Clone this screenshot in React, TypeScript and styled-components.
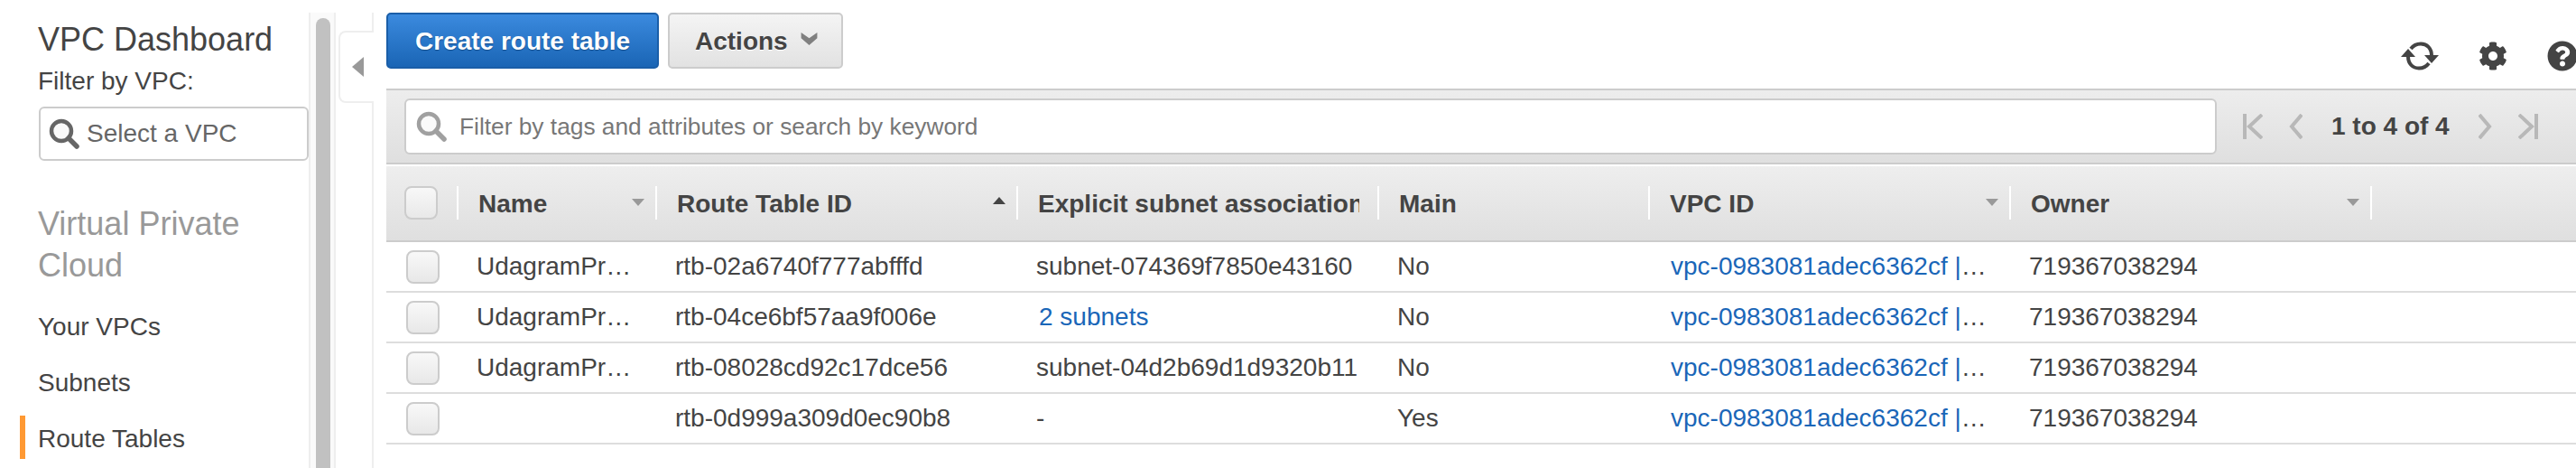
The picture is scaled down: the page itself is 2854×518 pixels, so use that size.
import React from 'react'
import styled, { createGlobalStyle } from 'styled-components'
import { FaCog, FaQuestionCircle } from 'react-icons/fa'

const columns = [
  { label: 'Name', width: 220, sort: 'down' },
  { label: 'Route Table ID', width: 400, sort: 'up' },
  { label: 'Explicit subnet association', width: 400, sort: '' },
  { label: 'Main', width: 300, sort: '' },
  { label: 'VPC ID', width: 400, sort: 'down' },
  { label: 'Owner', width: 400, sort: 'down' },
  { label: '', width: 240, sort: '' },
]

const vpc = 'vpc-0983081adec6362cf | UdagramProd'
const owner = '719367038294'

const rows = [
  { name: 'UdagramProd-Public', id: 'rtb-02a6740f777abfffd', subnet: 'subnet-074369f7850e43160', main: 'No' },
  { name: 'UdagramProd-Public', id: 'rtb-04ce6bf57aa9f006e', subnet: '2 subnets', main: 'No', link: true },
  { name: 'UdagramProd-Private', id: 'rtb-08028cd92c17dce56', subnet: 'subnet-04d2b69d1d9320b11', main: 'No' },
  { name: '', id: 'rtb-0d999a309d0ec90b8', subnet: '-', main: 'Yes' },
]

const SearchIcon = ({ color }: { color: string }) => (
  <svg width={34} height={34} viewBox="0 0 34 34" fill="none">
    <circle cx="14" cy="14" r="11" stroke={color} strokeWidth="4.5" fill="#fafafa" />
    <path d="M22 22l9 9" stroke={color} strokeWidth="5.5" strokeLinecap="round" />
  </svg>
)

const RefreshIcon = () => (
  <svg width="42" height="34" viewBox="0 0 42 32" fill="none">
    <path d="M11 8C14 4 18 2.5 22 2.5c7 0 12 5 12 13" stroke="#444" strokeWidth="4" />
    <path d="M31 24C28 28 24 29.5 20 29.5c-7 0-12-5-12-13" stroke="#444" strokeWidth="4" />
    <path d="M0 17L8 8l8 9zM26 15h16l-8 9z" fill="#444" />
  </svg>
)

const Chevron = ({ d, width }: { d: string; width: number }) => (
  <svg width={width} height="28" viewBox={`0 0 ${width} 28`} fill="none">
    <path d={d} stroke="#b8b8b8" strokeWidth="4" />
  </svg>
)

const App = () => (
  <>
    <GlobalStyle />
    <Page>
      <Sidebar>
        <Title>VPC Dashboard</Title>
        <FilterLabel>Filter by VPC:</FilterLabel>
        <SelectBox>
          <SearchIcon color="#666" />
          <span>Select a VPC</span>
        </SelectBox>
        <SectionTitle>Virtual Private Cloud</SectionTitle>
        <NavItem>Your VPCs</NavItem>
        <NavItem>Subnets</NavItem>
        <NavItem $active>Route Tables</NavItem>
      </Sidebar>
      <Gutter>
        <Thumb />
      </Gutter>
      <CollapseRail>
        <CollapseTab>
          <Arrow />
        </CollapseTab>
      </CollapseRail>
      <Main>
        <Toolbar>
          <PrimaryButton>Create route table</PrimaryButton>
          <ActionsButton>
            Actions
            <ActionsCaret viewBox="0 0 14 11">
              <path d="M0 0l7 5 7-5v5l-7 6-7-6z" fill="#808080" />
            </ActionsCaret>
          </ActionsButton>
          <ToolIcons>
            <RefreshIcon />
            <FaCog size={32} color="#444" />
            <FaQuestionCircle size={34} color="#444" />
          </ToolIcons>
        </Toolbar>
        <FilterBar>
          <FilterInput>
            <SearchIcon color="#a0a0a0" />
            <span>Filter by tags and attributes or search by keyword</span>
          </FilterInput>
          <Pager>
            <Chevron width={22} d="M2 0v28M21 1L7 14l14 13" />
            <Chevron width={15} d="M14 1L3 14l11 13" />
            <PageCount>1 to 4 of 4</PageCount>
            <Chevron width={15} d="M1 1l11 13L1 27" />
            <Chevron width={22} d="M20 0v28M1 1l14 13L1 27" />
          </Pager>
        </FilterBar>
        <HeaderRow>
          <CheckCell>
            <Checkbox />
          </CheckCell>
          {columns.map((col) => (
            <HeaderCell key={col.label} $width={col.width}>
              <HeaderLabel>{col.label}</HeaderLabel>
              {col.sort && <SortCaret $dir={col.sort} />}
            </HeaderCell>
          ))}
        </HeaderRow>
        {rows.map((row) => (
          <Row key={row.id}>
            <CheckCell $row>
              <Checkbox />
            </CheckCell>
            <Cell $width={220}>{row.name}</Cell>
            <Cell $width={400}>{row.id}</Cell>
            <Cell $width={400}>{row.link ? <CellLink>{row.subnet}</CellLink> : row.subnet}</Cell>
            <Cell $width={300}>{row.main}</Cell>
            <Cell $width={400}>
              <CellLink>{vpc}</CellLink>
            </Cell>
            <Cell $width={400}>{owner}</Cell>
          </Row>
        ))}
      </Main>
    </Page>
  </>
)

const GlobalStyle = createGlobalStyle`
  html, body {
    margin: 0;
    padding: 0;
    background: #fff;
    overflow: hidden;
  }
  body {
    font-family: 'Liberation Sans', Arial, sans-serif;
    color: #444;
  }
`

const Page = styled.div`
  display: flex;
  width: 2854px;
  height: 518px;
  padding-top: 14px;
  box-sizing: border-box;
  overflow: hidden;
`

const Sidebar = styled.div`
  width: 342px;
  flex: none;
  padding: 7px 0 0 42px;
  box-sizing: border-box;
`

const Title = styled.div`
  font-size: 36px;
  line-height: 46px;
  color: #444;
`

const FilterLabel = styled.div`
  font-size: 28px;
  line-height: 30px;
  margin-top: 8px;
`

const SelectBox = styled.div`
  display: flex;
  align-items: center;
  gap: 8px;
  width: 299px;
  height: 60px;
  margin: 13px 0 0 1px;
  padding-left: 9px;
  box-sizing: border-box;
  border: 2px solid #ccc;
  border-radius: 6px;
  font-size: 28px;
  color: #666;
`

const SectionTitle = styled.div`
  font-size: 36px;
  line-height: 46px;
  color: #999;
  margin: 47px 0 21px;
  width: 280px;
`

const NavItem = styled.div<{ $active?: boolean }>`
  position: relative;
  font-size: 28px;
  line-height: 48px;
  height: 48px;
  margin-bottom: 14px;
  color: #444;

  ${(p) =>
    p.$active &&
    `
    &::before {
      content: '';
      position: absolute;
      left: -20px;
      top: -2px;
      width: 6px;
      height: 48px;
      background: #ff9933;
    }
  `}
`

const Gutter = styled.div`
  flex: none;
  width: 30px;
  padding: 6px 0 0 6px;
  box-sizing: border-box;
  background: #fafafa;
  border-left: 2px solid #eee;
  border-right: 2px solid #eee;
`

const Thumb = styled.div`
  width: 16px;
  height: 600px;
  border-radius: 8px;
  background: #c1c1c1;
`

const CollapseRail = styled.div`
  flex: none;
  width: 42px;
  padding: 20px 0 0 3px;
  box-sizing: border-box;
  border-right: 2px solid #eee;
`

const CollapseTab = styled.div`
  display: flex;
  align-items: center;
  width: 39px;
  height: 80px;
  margin-right: -2px;
  padding-left: 13px;
  box-sizing: border-box;
  position: relative;
  background: #fff;
  border: 2px solid #eee;
  border-right: none;
  border-radius: 8px 0 0 8px;
`

const Arrow = styled.div`
  width: 0;
  height: 0;
  border-top: 11px solid transparent;
  border-bottom: 11px solid transparent;
  border-right: 13px solid #999;
`

const Main = styled.div`
  flex: none;
  width: 2440px;
  margin-left: 14px;
`

const Toolbar = styled.div`
  display: flex;
  height: 84px;
  gap: 10px;
`

const PrimaryButton = styled.div`
  display: flex;
  align-items: center;
  justify-content: center;
  width: 302px;
  height: 62px;
  padding-top: 2px;
  box-sizing: border-box;
  border: 2px solid #1a5ea8;
  border-radius: 5px;
  background: linear-gradient(#3b8ade, #1a65b5);
  color: #fff;
  font-size: 28px;
  font-weight: bold;
  text-shadow: 0 1px 1px #124a86;
`

const ActionsButton = styled.div`
  display: flex;
  align-items: center;
  gap: 14px;
  width: 194px;
  height: 62px;
  padding: 2px 0 0 28px;
  box-sizing: border-box;
  border: 2px solid #ccc;
  border-radius: 5px;
  background: linear-gradient(#f4f4f4, #e2e2e2);
  color: #444;
  font-size: 28px;
  font-weight: bold;
  text-shadow: 0 1px 0 #fff;
`

const ActionsCaret = styled.svg`
  width: 19px;
  height: 14px;
  margin-top: -6px;
`

const ToolIcons = styled.div`
  display: flex;
  align-items: center;
  gap: 44px;
  height: 34px;
  margin: 31px 12px 0 auto;
`

const FilterBar = styled.div`
  display: flex;
  align-items: center;
  height: 84px;
  padding-left: 20px;
  box-sizing: border-box;
  border-top: 2px solid #ccc;
  border-bottom: 2px solid #ccc;
  background: linear-gradient(#ededed, #dfdfdf);
`

const FilterInput = styled.div`
  display: flex;
  align-items: center;
  gap: 14px;
  width: 2008px;
  height: 62px;
  padding-left: 11px;
  box-sizing: border-box;
  border: 2px solid #ccc;
  border-radius: 6px;
  background: #fff;
  font-size: 26.3px;
  color: #777;
`

const Pager = styled.div`
  display: flex;
  align-items: center;
  gap: 29px;
  margin-left: 29px;
`

const PageCount = styled.div`
  font-size: 28px;
  font-weight: bold;
  color: #444;
  margin: 0 3px;
`

const HeaderRow = styled.div`
  display: flex;
  align-items: flex-start;
  height: 84px;
  margin-top: 2px;
  padding-top: 22px;
  box-sizing: border-box;
  border-bottom: 2px solid #ccc;
  background: linear-gradient(#eeeeee, #dfdfdf);
`

const CheckCell = styled.div<{ $row?: boolean }>`
  flex: none;
  width: 78px;
  padding-left: ${(p) => (p.$row ? 22 : 20)}px;
  box-sizing: border-box;
`

const Checkbox = styled.div`
  width: 37px;
  height: 37px;
  box-sizing: border-box;
  border: 2px solid #ccc;
  border-radius: 8px;
  background: linear-gradient(#f8f8f8, #e8e8e8);
`

const HeaderCell = styled.div<{ $width: number }>`
  position: relative;
  flex: none;
  display: flex;
  align-items: center;
  width: ${(p) => p.$width}px;
  height: 37px;
  padding: 2px 20px 0 22px;
  box-sizing: border-box;
  border-left: 2px solid #fff;
`

const HeaderLabel = styled.div`
  overflow: hidden;
  white-space: nowrap;
  font-size: 28px;
  font-weight: bold;
  color: #444;
`

const SortCaret = styled.div<{ $dir: string }>`
  position: absolute;
  right: 12px;
  top: ${(p) => (p.$dir === 'up' ? 12 : 14)}px;
  width: 0;
  height: 0;
  border-left: 7px solid transparent;
  border-right: 7px solid transparent;
  ${(p) => (p.$dir === 'up' ? 'border-bottom: 8px solid #444;' : 'border-top: 8px solid #999;')}
`

const Row = styled.div`
  display: flex;
  align-items: center;
  height: 56px;
  box-sizing: border-box;
  border-bottom: 2px solid #ddd;
`

const Cell = styled.div<{ $width: number }>`
  flex: none;
  width: ${(p) => p.$width}px;
  padding: 0 18px 0 22px;
  box-sizing: border-box;
  overflow: hidden;
  white-space: nowrap;
  text-overflow: ellipsis;
  font-size: 28px;
  color: #444;
`

const CellLink = styled.span`
  margin-left: 3px;
  color: #1a66b8;
`

export default App
